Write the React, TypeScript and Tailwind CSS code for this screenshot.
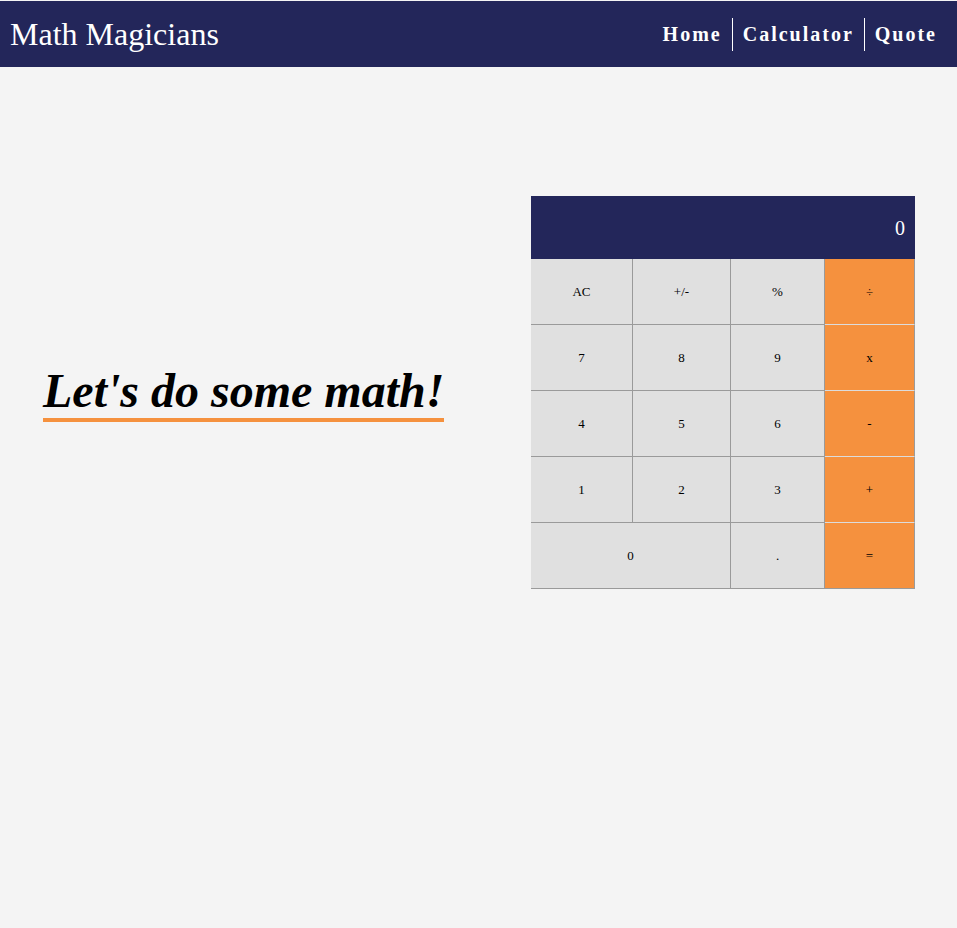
import React from "react"

const serif = { fontFamily: "'Liberation Serif', 'Times New Roman', serif" }

const rows: { label: string; orange?: boolean; span?: boolean }[][] = [
  [{ label: "AC" }, { label: "+/-" }, { label: "%" }, { label: "÷", orange: true }],
  [{ label: "7" }, { label: "8" }, { label: "9" }, { label: "x", orange: true }],
  [{ label: "4" }, { label: "5" }, { label: "6" }, { label: "-", orange: true }],
  [{ label: "1" }, { label: "2" }, { label: "3" }, { label: "+", orange: true }],
  [{ label: "0", span: true }, { label: "." }, { label: "=", orange: true }],
]

const App = () => {
  return (
    <div className="min-h-[928px] bg-[#f4f4f4] pt-px" style={serif}>
      <header className="flex h-[66px] items-center justify-between bg-[#23265a] pl-[10px] pr-[10px]">
        <h1 className="text-[32px] text-white">Math Magicians</h1>
        <nav className="flex items-center">
          <a className="px-[10px] text-[20px] font-bold tracking-[2px] text-white">Home</a>
          <span className="h-[33px] w-px bg-white" />
          <a className="px-[10px] text-[20px] font-bold tracking-[2px] text-white">Calculator</a>
          <span className="h-[33px] w-px bg-white" />
          <a className="px-[10px] text-[20px] font-bold tracking-[2px] text-white">Quote</a>
        </nav>
      </header>

      <main className="flex items-center justify-between pl-[43px] pr-[42px] pt-[129px]">
        <h2 className="border-b-4 border-[#f5913e] text-[48px] font-bold italic leading-[55px] text-black">
          Let's do some math!
        </h2>

        <div className="w-[384px]">
          <div className="flex h-[63px] items-center justify-end bg-[#23265a] pr-[10px] text-[20px] text-white">
            0
          </div>
          <div className="grid grid-cols-[102px_98px_94px_90px]">
            {rows.map((row, r) =>
              row.map((b) => (
                <button
                  key={b.label}
                  className={
                    "h-[66px] border-r border-b text-[13px] text-black " +
                    (b.span ? "col-span-2 " : "") +
                    (b.orange
                      ? r === 4
                        ? "border-[#9a9a9a] bg-[#f5913e]"
                        : "border-r-[#9a9a9a] border-b-[#dcdcdc] bg-[#f5913e]"
                      : "border-[#9a9a9a] bg-[#e0e0e0]")
                  }
                  style={serif}
                >
                  {b.label}
                </button>
              ))
            )}
          </div>
        </div>
      </main>
    </div>
  )
}

export default App
